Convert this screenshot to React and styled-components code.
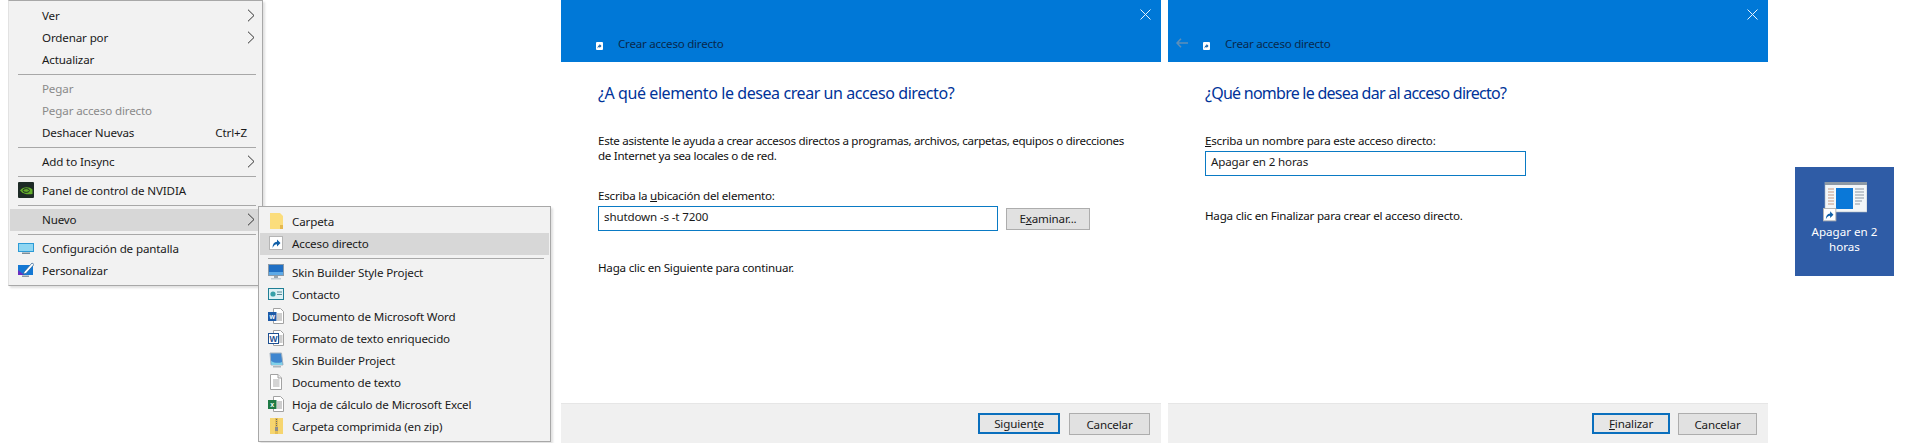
import { styled, createGlobalStyle } from 'styled-components';

const GlobalStyle = createGlobalStyle`
  html, body {
    margin: 0;
    padding: 0;
    background: #fff;
  }
  body {
    font-family: "Noto Sans", "Open Sans", "Liberation Sans", sans-serif;
    overflow: hidden;
  }
`

const Page = styled.div`
  display: flex;
  width: 1917px;
  height: 443px;
  overflow: hidden;
`

const MenuColumn = styled.div`
  width: 553px;
  padding-left: 8px;
  flex-shrink: 0;
`

const Menu = styled.div`
  position: relative;
  box-sizing: border-box;
  width: 255px;
  padding: 4px 1px 3px;
  background: #f2f2f2;
  border: 1px solid #a8a8a8;
  border-left-color: #e2e2e2;
  box-shadow: 2px 2px 2px rgba(0, 0, 0, 0.12);
`

const Flyout = styled(Menu)`
  position: absolute;
  left: 249px;
  top: 205px;
  width: 293px;
  padding: 4px 1px 3px;
  border-left-color: #a8a8a8;
`

const Row = styled.div`
  display: flex;
  align-items: center;
  box-sizing: border-box;
  height: 22px;
  padding: 0 6px 2px 8px;
  font-size: 11.6px;
  letter-spacing: -0.14px;
  white-space: nowrap;
  color: ${props => props.$disabled ? '#8a8a8a' : '#1a1a1a'};
  background: ${props => props.$active ? '#d7d7d7' : 'transparent'};
`

const IconSlot = styled.span`
  display: flex;
  align-items: center;
  justify-content: center;
  width: 16px;
  height: 16px;
  margin-right: 8px;
  flex-shrink: 0;
`

const RowLabel = styled.span`
  flex: 1;
`

const Shortcut = styled.span`
  margin-right: 8px;
`

const Separator = styled.div`
  height: 1px;
  margin: 3px 5px 3px 8px;
  background: #a8a8a8;
`

const Dialog = styled.section`
  display: flex;
  flex-direction: column;
  width: 600px;
  height: 443px;
  margin-right: ${props => props.$gap || 0}px;
  flex-shrink: 0;
`

const Header = styled.header`
  display: flex;
  flex-direction: column;
  justify-content: space-between;
  box-sizing: border-box;
  height: 62px;
  padding: 9px 10px 10px 8px;
  background: #0078d7;
`

const CloseRow = styled.div`
  display: flex;
  justify-content: flex-end;
`

const TitleRow = styled.div`
  display: flex;
  align-items: center;
  height: 18px;
`

const BackSlot = styled.span`
  display: flex;
  width: 27px;
`

const TitleIconSlot = styled.span`
  display: flex;
  margin: 6px 15px 0 0;
`

const Title = styled.span`
  font-size: 11.6px;
  letter-spacing: -0.25px;
  color: #08294d;
`

const Body = styled.div`
  flex: 1;
  padding: 0 37px;
  background: #fff;
`

const Heading = styled.h2`
  margin: 19px 0 0;
  font-size: 16px;
  line-height: 24px;
  font-weight: 400;
  letter-spacing: ${props => props.$spacing}px;
  color: #003399;
`

const Text = styled.p`
  margin: ${props => props.$top}px 0 0;
  font-size: 11.6px;
  line-height: 15px;
  letter-spacing: ${props => props.$spacing || -0.22}px;
  white-space: nowrap;
  color: #111;
`

const FieldRow = styled.div`
  display: flex;
  align-items: center;
  gap: 8px;
  margin-top: 3px;
`

const Field = styled.div`
  box-sizing: border-box;
  width: ${props => props.$width}px;
  height: 25px;
  padding: 1px 5px;
  font-size: 11.6px;
  line-height: 17px;
  letter-spacing: -0.15px;
  color: #1a1a1a;
  border: 1px solid #0a7ac4;
`

const Footer = styled.footer`
  display: flex;
  justify-content: flex-end;
  gap: ${props => props.$gap}px;
  box-sizing: border-box;
  height: 40px;
  padding: 9px ${props => props.$right}px 0 0;
  background: #f0f0f0;
  border-top: 1px solid #e6e6e6;
`

const Button = styled.button`
  box-sizing: border-box;
  width: ${props => props.$width}px;
  height: ${props => props.$primary ? 21 : 22}px;
  padding: 0;
  font-family: inherit;
  font-size: 11.6px;
  letter-spacing: -0.15px;
  color: #1a1a1a;
  background: ${props => props.$primary ? '#e6e6e6' : '#e1e1e1'};
  border: ${props => props.$primary ? '2px solid #0a6fbd' : '1px solid #adadad'};
`

const Tile = styled.div`
  display: flex;
  flex-direction: column;
  align-items: center;
  box-sizing: border-box;
  width: 99px;
  height: 109px;
  margin: 167px 0 0 27px;
  padding-top: 15px;
  flex-shrink: 0;
  background: #2f5ca6;
`

const TileLabel = styled.span`
  width: 92px;
  text-align: center;
  font-size: 11.6px;
  line-height: 15px;
  color: #fff;
`

function Chevron () {
  return (
    <svg width="8" height="13" viewBox="0 0 8 13" fill="none">
      <path d="M1 .7 7 6.500 1 12.300" stroke="#333" strokeWidth="1" />
    </svg>
  )
}

function ShortcutArrow ({ size = 16 }) {
  return (
    <svg width={size} height={size} viewBox="0 0 16 16">
      <rect x="1.5" y="1.5" width="13" height="13" fill="#fff" stroke="#b5b5b5" />
      <path d="M4.500 13c0-4 1.500-6 4.500-6.300V4.500l3.500 3.500L9 11.500V9.200C7 9.300 5.600 10.600 4.500 13z" fill="#0f5fa8" />
    </svg>
  )
}

function TitleShortcutIcon () {
  return (
    <svg width="7" height="8" viewBox="0 0 7 8">
      <rect width="7" height="8" rx="1" fill="#fff" />
      <path d="M1.500 6.500c0-2 .8-3 2-3.200V2l2 2-2 2V4.800c-.8 0-1.400.6-2 1.700z" fill="#0f5fa8" />
    </svg>
  )
}

function FolderIcon () {
  return (
    <svg width="13" height="16" viewBox="0 0 13 16">
      <path d="M0 0h10l3 3v13H0z" fill="#fbdd7c" />
      <path d="M10 12h3v4h-3z" fill="#e5b94f" />
    </svg>
  )
}

function MonitorIcon () {
  return (
    <svg width="16" height="16" viewBox="0 0 16 16">
      <rect x="0.5" y="0.5" width="15" height="11" fill="#1f6fc4" stroke="#8a9aa8" />
      <path d="M1 8h14v3H1z" fill="#5da9e6" />
      <path d="M6 12h4v2H6z" fill="#9aa5ad" />
      <path d="M3 14h10v1.500H3z" fill="#c3ccd3" />
    </svg>
  )
}

function ContactIcon () {
  return (
    <svg width="16" height="12" viewBox="0 0 16 12">
      <rect x="0.5" y="0.5" width="15" height="11" fill="#dff1f5" stroke="#1f7f95" />
      <circle cx="5" cy="6" r="2.600" fill="#37a0a8" />
      <path d="M9 4h5M9 6.500h5" stroke="#5a8a96" strokeWidth="1" />
    </svg>
  )
}

function DocIcon () {
  return (
    <svg width="12" height="16" viewBox="0 0 12 16">
      <path d="M.5.5h7.500l3.500 3.500v11.500H.5z" fill="#fff" stroke="#a2a2a2" />
      <path d="M8 .5V4h3.500" fill="#eee" stroke="#a2a2a2" />
      <path d="M3 6h6.500M3 8h6.500M3 10h6.500M3 12h6.500" stroke="#a9a9a9" strokeWidth="1" />
    </svg>
  )
}

function OfficeIcon ({ letter, color }) {
  return (
    <svg width="16" height="16" viewBox="0 0 16 16">
      <path d="M5.500.5h7l3 3v12h-10z" fill="#fff" stroke="#a2a2a2" />
      <path d="M9 6h5M9 8h5M9 10h5M9 12h5" stroke="#9b9b9b" strokeWidth="1" />
      <rect x="0" y="4" width="8.500" height="9" fill={color} />
      <text x="4.200" y="11" textAnchor="middle" fontSize="7" fontWeight="700" fill="#fff" fontFamily="Liberation Sans">{letter}</text>
    </svg>
  )
}

function RtfIcon () {
  return (
    <svg width="16" height="16" viewBox="0 0 16 16">
      <path d="M5.500.5h7l3 3v12h-10z" fill="#fff" stroke="#a2a2a2" />
      <path d="M11 6h3.500M11 8h3.500M11 10h3.500M11 12h3.500" stroke="#9b9b9b" strokeWidth="1" />
      <rect x="0.500" y="3.500" width="10" height="10" fill="#fff" stroke="#1d4f91" />
      <text x="5.500" y="11.500" textAnchor="middle" fontSize="8.500" fontWeight="700" fill="#1d4f91" fontFamily="Liberation Sans">W</text>
    </svg>
  )
}

function SkinProjectIcon () {
  return (
    <svg width="16" height="16" viewBox="0 0 16 16">
      <path d="M2 1h11.500L15 13H3z" fill="#3f86cf" stroke="#a5b3bf" />
      <path d="M3 9c3 2 8 2.500 11 1l.5 3H3.500z" fill="#7fd0e8" />
      <path d="M5 14h8v1.500H5z" fill="#aeb7bd" />
    </svg>
  )
}

function ZipIcon () {
  return (
    <svg width="13" height="16" viewBox="0 0 13 16">
      <path d="M0 0h13v16H0z" fill="#f6d56f" />
      <path d="M5 0h3v16H5z" fill="#e4bd54" />
      <path d="M6 1h1v1H6zM6 3h1v1H6zM6 5h1v1H6zM6 7h1v1H6z" fill="#6a6a6a" />
      <rect x="5" y="9" width="3" height="4" fill="#8e8e8e" />
    </svg>
  )
}

function NvidiaIcon () {
  return (
    <svg width="16" height="16" viewBox="0 0 16 16">
      <rect width="16" height="16" rx="1" fill="#1d2a25" />
      <path d="M2 8.500C5 4.500 11 4.200 14.500 7.500V12C10 13 5 12 2 8.500z" fill="#63ad2b" />
      <ellipse cx="8.200" cy="8.500" rx="3.200" ry="1.900" fill="none" stroke="#1d2a25" />
    </svg>
  )
}

function DisplayIcon () {
  return (
    <svg width="16" height="13" viewBox="0 0 16 13">
      <rect x="0" y="1" width="16" height="9" fill="#2d9bd6" />
      <rect x="1" y="2" width="14" height="7" fill="#8fd6f2" />
      <path d="M4 10.500h8v1.500H4z" fill="#7a8d99" />
    </svg>
  )
}

function PersonalizeIcon () {
  return (
    <svg width="16" height="16" viewBox="0 0 16 16">
      <rect x="0" y="3" width="15" height="10" fill="#1478d4" />
      <path d="M0 8l6 5H0z" fill="#6b2fc0" />
      <path d="M6 10 14 1l2 1.500L8 11.500 5.500 12z" fill="#fff" stroke="#255b91" strokeWidth="0.700" />
      <path d="M4 13.500h7V15H4z" fill="#8b99a5" />
    </svg>
  )
}

function CloseIcon () {
  return (
    <svg width="11" height="11" viewBox="0 0 11 11" fill="none">
      <path d="M.5.500l10 10M10.500.500l-10 10" stroke="#e8f3fc" strokeWidth="1" />
    </svg>
  )
}

function BackIcon () {
  return (
    <svg width="12" height="10" viewBox="0 0 12 10" fill="none">
      <path d="M5 .8 1 5l4 4.200M1 5h11" stroke="#5f8fb8" strokeWidth="1.500" />
    </svg>
  )
}

function WindowIcon () {
  return (
    <svg width="44" height="42" viewBox="0 0 44 42">
      <rect x="2" y="0" width="42" height="30" fill="#f3f6f8" stroke="#a9b4bf" strokeWidth="0.600" />
      <rect x="2" y="0" width="42" height="3" fill="#8d99a5" />
      <rect x="13" y="6" width="17" height="21" fill="#0a78d8" />
      <path d="M5 7h6M5 10h6M5 13h6M5 16h6M5 19h6M5 22h6" stroke="#c59a83" strokeWidth="1" />
      <path d="M32 7h9M32 10h9M32 13h9M32 16h9M32 19h7M32 22h5" stroke="#8d98a3" strokeWidth="1" />
      <g transform="translate(0 26) scale(0.950)">
        <rect x="0.500" y="0.500" width="13" height="13" fill="#fff" stroke="#b5b5b5" />
        <path d="M3 12c0-4 1.500-6 4.500-6.300V3.500L11 7 7.500 10.500V8.200C5.500 8.300 4 9.600 3 12z" fill="#0f5fa8" />
      </g>
    </svg>
  )
}

const flyoutItems = [
  { label: 'Skin Builder Style Project', icon: <MonitorIcon /> },
  { label: 'Contacto', icon: <ContactIcon /> },
  { label: 'Documento de Microsoft Word', icon: <OfficeIcon letter="w" color="#1d5aa8" /> },
  { label: 'Formato de texto enriquecido', icon: <RtfIcon /> },
  { label: 'Skin Builder Project', icon: <SkinProjectIcon /> },
  { label: 'Documento de texto', icon: <DocIcon /> },
  { label: 'Hoja de cálculo de Microsoft Excel', icon: <OfficeIcon letter="x" color="#1e7a44" /> },
  { label: 'Carpeta comprimida (en zip)', icon: <ZipIcon /> },
]

function MenuRow ({ label, icon, arrow, disabled, active, shortcut }) {
  return (
    <Row $disabled={disabled} $active={active}>
      <IconSlot>{icon}</IconSlot>
      <RowLabel>{label}</RowLabel>
      {shortcut && <Shortcut>{shortcut}</Shortcut>}
      {arrow && <Chevron />}
    </Row>
  )
}

function WizardHeader ({ back }) {
  return (
    <Header>
      <CloseRow><CloseIcon /></CloseRow>
      <TitleRow>
        <BackSlot>{back && <BackIcon />}</BackSlot>
        <TitleIconSlot><TitleShortcutIcon /></TitleIconSlot>
        <Title>Crear acceso directo</Title>
      </TitleRow>
    </Header>
  )
}

export default function App () {
  return (
    <>
      <GlobalStyle />
      <Page>
        <MenuColumn>
          <Menu>
            <MenuRow label="Ver" arrow />
            <MenuRow label="Ordenar por" arrow />
            <MenuRow label="Actualizar" />
            <Separator />
            <MenuRow label="Pegar" disabled />
            <MenuRow label="Pegar acceso directo" disabled />
            <MenuRow label="Deshacer Nuevas" shortcut="Ctrl+Z" />
            <Separator />
            <MenuRow label="Add to Insync" arrow />
            <Separator />
            <MenuRow label="Panel de control de NVIDIA" icon={<NvidiaIcon />} />
            <Separator />
            <MenuRow label="Nuevo" arrow active />
            <Separator />
            <MenuRow label="Configuración de pantalla" icon={<DisplayIcon />} />
            <MenuRow label="Personalizar" icon={<PersonalizeIcon />} />

            <Flyout>
              <MenuRow label="Carpeta" icon={<FolderIcon />} />
              <MenuRow label="Acceso directo" icon={<ShortcutArrow />} active />
              <Separator />
              {flyoutItems.map(item => (
                <MenuRow key={item.label} label={item.label} icon={item.icon} />
              ))}
            </Flyout>
          </Menu>
        </MenuColumn>

        <Dialog $gap={7}>
          <WizardHeader />
          <Body>
            <Heading $spacing={-0.42}>¿A qué elemento le desea crear un acceso directo?</Heading>
            <Text $top={28} $spacing={-0.3}>
              Este asistente le ayuda a crear accesos directos a programas, archivos, carpetas, equipos o direcciones<br />
              de Internet ya sea locales o de red.
            </Text>
            <Text $top={25}>Escriba la <u>u</u>bicación del elemento:</Text>
            <FieldRow>
              <Field $width={400}>shutdown -s -t 7200</Field>
              <Button $width={84}>E<u>x</u>aminar...</Button>
            </FieldRow>
            <Text $top={29}>Haga clic en Siguiente para continuar.</Text>
          </Body>
          <Footer $gap={9} $right={11}>
            <Button $primary $width={82}>Siguien<u>t</u>e</Button>
            <Button $width={81}>Cancelar</Button>
          </Footer>
        </Dialog>

        <Dialog>
          <WizardHeader back />
          <Body>
            <Heading $spacing={-0.75}>¿Qué nombre le desea dar al acceso directo?</Heading>
            <Text $top={28}><u>E</u>scriba un nombre para este acceso directo:</Text>
            <FieldRow>
              <Field $width={321}>Apagar en 2 horas</Field>
            </FieldRow>
            <Text $top={32}>Haga clic en Finalizar para crear el acceso directo.</Text>
          </Body>
          <Footer $gap={8} $right={11}>
            <Button $primary $width={78}><u>F</u>inalizar</Button>
            <Button $width={79}>Cancelar</Button>
          </Footer>
        </Dialog>

        <Tile>
          <WindowIcon />
          <TileLabel>Apagar en 2 horas</TileLabel>
        </Tile>
      </Page>
    </>
  )
}
